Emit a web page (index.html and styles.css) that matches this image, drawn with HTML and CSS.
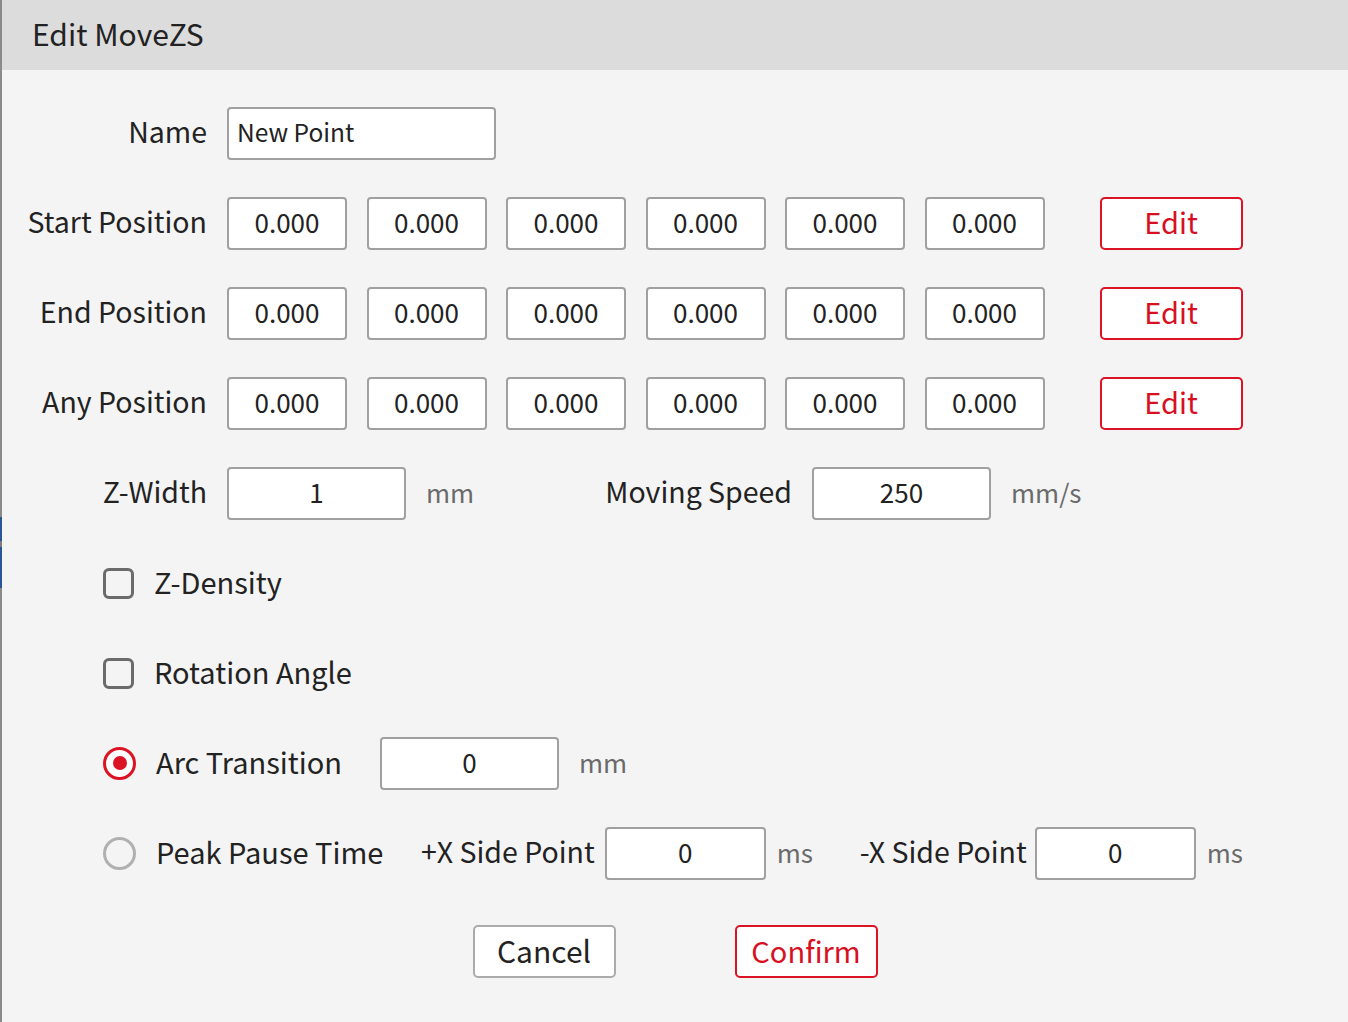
FILE: index.html
```html
<!DOCTYPE html>
<html>
<head>
<meta charset="utf-8">
<link rel="stylesheet" href="styles.css">
</head>
<body>
<div class="dialog">
  <div class="edge-mark"></div>
  <div class="header"><span class="title">Edit MoveZS</span></div>
  <div class="content">
    <div class="row">
      <div class="label">Name</div>
      <div class="field name-field">New Point</div>
    </div>
    <div class="row">
      <div class="label">Start Position</div>
      <div class="coords">
        <div class="field coord">0.000</div><div class="field coord">0.000</div><div class="field coord">0.000</div><div class="field coord">0.000</div><div class="field coord">0.000</div><div class="field coord">0.000</div>
      </div>
      <div class="btn red edit">Edit</div>
    </div>
    <div class="row">
      <div class="label">End Position</div>
      <div class="coords">
        <div class="field coord">0.000</div><div class="field coord">0.000</div><div class="field coord">0.000</div><div class="field coord">0.000</div><div class="field coord">0.000</div><div class="field coord">0.000</div>
      </div>
      <div class="btn red edit">Edit</div>
    </div>
    <div class="row">
      <div class="label">Any Position</div>
      <div class="coords">
        <div class="field coord">0.000</div><div class="field coord">0.000</div><div class="field coord">0.000</div><div class="field coord">0.000</div><div class="field coord">0.000</div><div class="field coord">0.000</div>
      </div>
      <div class="btn red edit">Edit</div>
    </div>
    <div class="row">
      <div class="label">Z-Width</div>
      <div class="field wide">1</div>
      <div class="unit unit-mm">mm</div>
      <div class="label-inline">Moving Speed</div>
      <div class="field wide">250</div>
      <div class="unit">mm/s</div>
    </div>
    <div class="row option">
      <span class="checkbox"></span>
      <span class="opt-text">Z-Density</span>
    </div>
    <div class="row option">
      <span class="checkbox"></span>
      <span class="opt-text">Rotation Angle</span>
    </div>
    <div class="row option">
      <span class="radio checked"></span>
      <span class="opt-text arc-text">Arc Transition</span>
      <div class="field wide">0</div>
      <div class="unit">mm</div>
    </div>
    <div class="row option">
      <span class="radio"></span>
      <span class="opt-text peak-text">Peak Pause Time</span>
      <span class="side-label">+X Side Point</span>
      <div class="field side">0</div>
      <div class="unit small-unit">ms</div>
      <span class="side-label minus">-X Side Point</span>
      <div class="field side">0</div>
      <div class="unit small-unit">ms</div>
    </div>
    <div class="actions">
      <div class="btn gray">Cancel</div>
      <div class="btn red">Confirm</div>
    </div>
  </div>
</div>
</body>
</html>
```

FILE: styles.css
```css
html, body {
  margin: 0;
  padding: 0;
  background: #f4f4f4;
}
body {
  font-family: "Noto Sans CJK JP", "Noto Sans", sans-serif;
  color: #222;
}
.dialog {
  position: relative;
  width: 1348px;
  height: 1022px;
  box-sizing: border-box;
  border-left: 2px solid #8a8a8a;
  background: #f4f4f4;
}
.edge-mark {
  position: absolute;
  left: -2px;
  top: 517px;
  width: 2px;
  height: 71px;
  background: linear-gradient(#2a5596 0, #2a5596 24px, #7b7b7b 24px, #7b7b7b 30px, #2a5596 30px);
}
.header {
  height: 70px;
  background: #dcdcdc;
  display: flex;
  align-items: center;
  padding-left: 30px;
}
.title {
  font-size: 30px;
  color: #222;
  padding-bottom: 5px;
}
.content {
  padding: 18px 0 0 25px;
}
.row {
  display: flex;
  align-items: center;
  height: 90px;
}
.label {
  width: 180px;
  text-align: right;
  margin-right: 20px;
  font-size: 28.5px;
  white-space: nowrap;
  padding-bottom: 5px;
}
.field {
  box-sizing: border-box;
  height: 53px;
  background: #fff;
  border: 2px solid #a0a0a0;
  border-radius: 4px;
  display: flex;
  align-items: center;
  justify-content: center;
  font-size: 26px;
  color: #222;
  padding-bottom: 4px;
}
.name-field {
  width: 269px;
  justify-content: flex-start;
  padding-left: 8px;
  font-size: 24.5px;
}
.coords {
  display: flex;
  gap: 19.5px;
}
.coord {
  width: 120px;
}
.btn {
  box-sizing: border-box;
  height: 53px;
  width: 143px;
  background: #fff;
  border-radius: 5px;
  display: flex;
  align-items: center;
  justify-content: center;
  font-size: 29px;
  padding-bottom: 4px;
}
.btn.red {
  border: 2px solid #dc1324;
  color: #d7101f;
}
.btn.gray {
  border: 2px solid #ababab;
  color: #222;
  font-size: 30px;
}
.edit {
  margin-left: 55px;
}
.wide {
  width: 179px;
}
.unit {
  margin-left: 20px;
  font-size: 26px;
  color: #6a6a6a;
  padding-bottom: 4px;
}
.unit-mm {
  width: 166px;
}
.label-inline {
  width: 200px;
  text-align: right;
  font-size: 28.5px;
  margin-right: 20px;
  white-space: nowrap;
  padding-bottom: 5px;
}
.option .checkbox,
.option .radio {
  margin-left: 76px;
}
.checkbox {
  box-sizing: border-box;
  width: 31px;
  height: 31px;
  border: 3px solid #6b6b6b;
  border-radius: 6px;
  background: transparent;
  flex: none;
}
.radio {
  box-sizing: border-box;
  width: 33px;
  height: 33px;
  border-radius: 50%;
  border: 3px solid #b0b0b0;
  flex: none;
  display: flex;
  align-items: center;
  justify-content: center;
}
.radio.checked {
  border-color: #dc1324;
  background: #fff;
}
.radio.checked::after {
  content: "";
  width: 14px;
  height: 14px;
  border-radius: 50%;
  background: #dc1324;
}
.opt-text {
  margin-left: 20px;
  font-size: 29px;
  white-space: nowrap;
  padding-bottom: 5px;
}
.arc-text {
  width: 224px;
}
.peak-text {
  width: 265px;
}
.side-label {
  font-size: 28.5px;
  white-space: nowrap;
  margin-right: 10px;
  padding-bottom: 5px;
}
.side-label.minus {
  margin-left: 48px;
  margin-right: 8px;
}
.side {
  width: 161px;
}
.small-unit {
  margin-left: 11px;
  width: 35px;
}
.actions {
  display: flex;
  justify-content: center;
  gap: 119px;
  margin-top: 27px;
  padding-right: 25px;
}
```
